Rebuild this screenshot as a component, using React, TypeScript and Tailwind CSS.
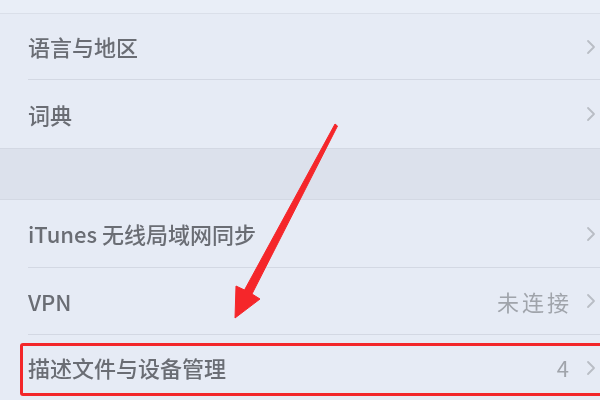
import React from 'react';

const font = { fontFamily: '"Noto Sans CJK SC", "Noto Sans", sans-serif' };

function Chevron() {
  return (
    <svg width="10" height="16" viewBox="0 0 10 16" className="shrink-0">
      <path d="M2 2 L8 8 L2 14" fill="none" stroke="#b9bdc5" strokeWidth="1.8" strokeLinecap="round" strokeLinejoin="round" />
    </svg>
  );
}

function Row({ label, value, h, border = true, children }: { label: string; value?: string; h: string; border?: boolean; children?: React.ReactNode }) {
  return (
    <div className={`relative flex items-stretch pl-[28px] ${h}`}>
      <div className={`flex flex-1 items-center pr-[4px] ${border ? 'border-b border-[#d3d8e3]' : ''}`}>
        <span className="flex-1 text-[22px] font-medium text-[#6a6d74] blur-[0.4px]">{label}</span>
        {value && <span className="mr-[14px] text-[22px] tracking-[3px] text-[#a0a4ab] blur-[0.4px]">{value}</span>}
        <Chevron />
      </div>
      {children}
    </div>
  );
}

export default function App() {
  return (
    <div className="relative h-[400px] w-[600px] overflow-hidden bg-[#e6ebf5]" style={font}>
      {/* top edge */}
      <div className="h-[14px] border-b border-[#dadfe9] bg-[#e9eef7]" />

      <Row label="语言与地区" h="h-[66px]" />
      <Row label="词典" h="h-[68px]" border={false} />

      {/* group gap */}
      <div className="h-[52px] border-y border-[#d3d8e3] bg-[#dce1ec]" />

      <Row label="iTunes 无线局域网同步" h="h-[68px]" />
      <Row label="VPN" value="未连接" h="h-[67px]" />
      <Row label="描述文件与设备管理" value="4" h="h-[65px]" border={false}>
        <div className="absolute left-[20px] right-[-3px] top-[8px] bottom-[4px] rounded-[3px] border-[3px] border-[#f3262a]" />
      </Row>

      {/* red arrow annotation */}
      <svg className="pointer-events-none absolute left-0 top-0" width="600" height="400" viewBox="0 0 600 400">
        <polygon
          points="335,124 337.5,126 252,294 260,299 235,318 236,286 244.5,290"
          fill="#f5262a"
          stroke="#f5262a"
          strokeWidth="1"
          strokeLinejoin="round"
        />
      </svg>
    </div>
  );
}
